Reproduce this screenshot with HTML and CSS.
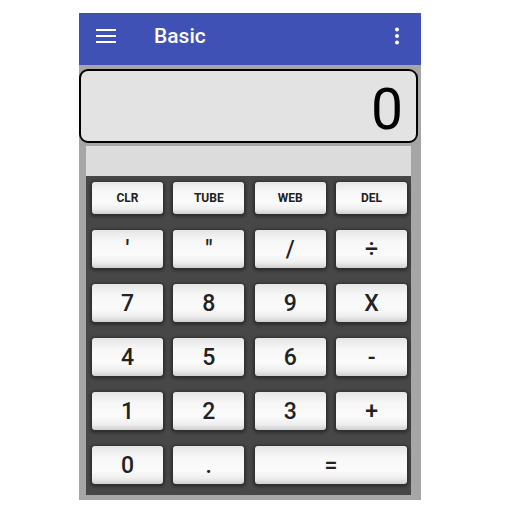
FILE: index.html
```html
<!DOCTYPE html>
<html lang="en">
<head>
  <meta charset="UTF-8" />
  <meta name="viewport" content="width=device-width, initial-scale=1.0" />
  <title>Basic</title>
  <link rel="stylesheet" href="styles.css">
</head>
<body>
  <div class="app">
    <div class="toolbar">
      <svg class="menu-icon" width="20" height="16" viewBox="0 0 20 16">
        <rect x="0" y="1" width="20" height="2" fill="#fff"/>
        <rect x="0" y="7" width="20" height="2" fill="#fff"/>
        <rect x="0" y="13" width="20" height="2" fill="#fff"/>
      </svg>
      <h1>Basic</h1>
      <svg class="more-icon" width="6" height="18" viewBox="0 0 6 18">
        <circle cx="3" cy="2.5" r="2" fill="#fff"/>
        <circle cx="3" cy="9" r="2" fill="#fff"/>
        <circle cx="3" cy="15.5" r="2" fill="#fff"/>
      </svg>
    </div>

    <div class="content">
      <div class="display">0</div>
      <div class="memo"></div>
      <div class="keypad">
        <button class="key small">CLR</button>
        <button class="key small">TUBE</button>
        <button class="key small">WEB</button>
        <button class="key small">DEL</button>

        <button class="key">'</button>
        <button class="key">"</button>
        <button class="key">/</button>
        <button class="key">÷</button>

        <button class="key">7</button>
        <button class="key">8</button>
        <button class="key">9</button>
        <button class="key">X</button>

        <button class="key">4</button>
        <button class="key">5</button>
        <button class="key">6</button>
        <button class="key">-</button>

        <button class="key">1</button>
        <button class="key">2</button>
        <button class="key">3</button>
        <button class="key">+</button>

        <button class="key">0</button>
        <button class="key">.</button>
        <button class="key wide">=</button>
      </div>
    </div>
  </div>
</body>
</html>
```

FILE: styles.css
```css
:root {
  --primary-color: #3f51b5;
  --frame-color: #a6a6a6;
  --display-bg: #e3e3e3;
  --memo-bg: #dcdcdc;
  --keypad-bg: #474747;
  --key-text: #222222;
}

body {
  margin: 0;
  padding: 0;
  background: #ffffff;
  font-family: Roboto, "Noto Sans", sans-serif;
}

.app {
  width: 342px;
  height: 487px;
  margin: 13px 0 0 79px;
  display: flex;
  flex-direction: column;
  background-color: var(--frame-color);
}

.toolbar {
  height: 46px;
  flex-shrink: 0;
  display: flex;
  align-items: center;
  padding: 0 21px 6px 17px;
  background-color: var(--primary-color);
  color: #ffffff;
}

.toolbar h1 {
  flex: 1;
  margin: 0 0 0 38px;
  font-size: 21px;
  font-weight: 500;
}

.content {
  flex: 1;
  display: flex;
  flex-direction: column;
  padding: 4px 10px 5px 7px;
}

.display {
  height: 62px;
  margin: 0 -7px 0 -7px;
  padding: 8px 13px 0 0;
  border: 2px solid #000000;
  border-radius: 9px;
  background-color: var(--display-bg);
  color: #000000;
  font-size: 57px;
  line-height: 62px;
  text-align: right;
}

.memo {
  height: 30px;
  margin-top: 3px;
  background-color: var(--memo-bg);
}

.keypad {
  flex: 1;
  display: grid;
  grid-template-columns: repeat(4, 1fr);
  grid-template-rows: 32px repeat(5, 38px);
  column-gap: 10.5px;
  row-gap: 16px;
  padding: 6px 4px 11px 6px;
  background-color: var(--keypad-bg);
}

.key {
  border: none;
  border-radius: 3px;
  padding: 0;
  font-family: inherit;
  font-size: 23px;
  font-weight: 500;
  color: var(--key-text);
  background: linear-gradient(#e6e6e6, #f7f7f7 30%, #fbfbfb 65%, #eeeeee 85%, #cfcfcf);
  box-shadow: 0 1px 3px 2px rgba(0, 0, 0, 0.35);
}

.key.small {
  font-size: 12px;
  font-weight: 700;
}

.key.wide {
  grid-column: span 2;
}
```
